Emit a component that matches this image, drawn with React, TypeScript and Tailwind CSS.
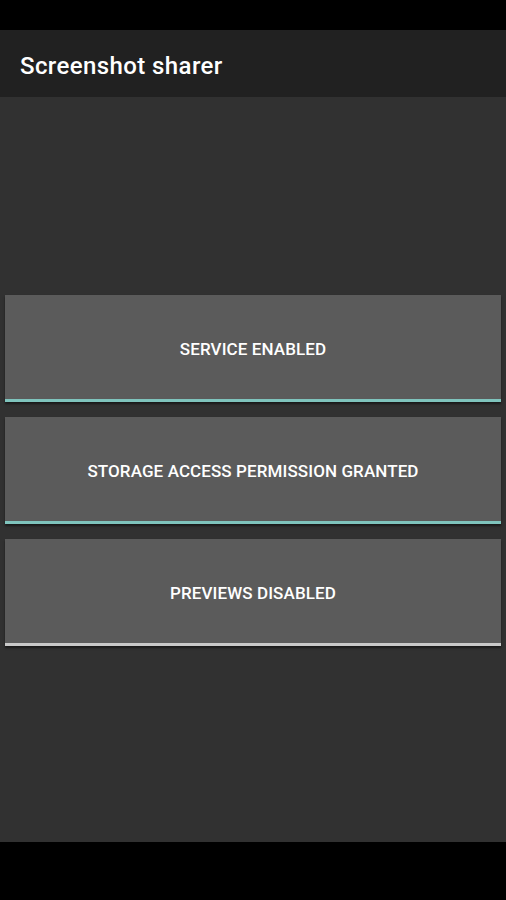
const toggles = [
  { label: "SERVICE ENABLED", on: true },
  { label: "STORAGE ACCESS PERMISSION GRANTED", on: true },
  { label: "PREVIEWS DISABLED", on: false },
];

const App = () => {
  return (
    <div
      className="flex h-[900px] w-[506px] flex-col bg-black"
      style={{ fontFamily: "Roboto, 'Noto Sans', sans-serif" }}
    >
      <div className="h-[30px] shrink-0 bg-black" />
      <header className="flex h-[67px] shrink-0 items-center bg-[#212121] px-5 pt-[5px] shadow-[0_2px_4px_rgba(0,0,0,0.4)]">
        <h1 className="text-[24px] font-medium tracking-[0.4px] text-white">Screenshot sharer</h1>
      </header>
      <main className="flex flex-1 flex-col gap-[15px] bg-[#313131] px-[5px] pt-[198px]">
        {toggles.map(item => (
          <button
            key={item.label}
            className={
              "flex h-[107px] items-center justify-center border-b-[3px] bg-[#5b5b5b] pt-[6px] shadow-[0_2px_2px_rgba(0,0,0,0.5)] " +
              (item.on ? "border-[#7fc4bd]" : "border-[#c9c9c9]")
            }
          >
            <span className="text-[17px] font-medium tracking-[0.1px] text-white">
              {item.label}
            </span>
          </button>
        ))}
      </main>
      <div className="h-[58px] shrink-0 bg-black" />
    </div>
  );
};

export default App;
